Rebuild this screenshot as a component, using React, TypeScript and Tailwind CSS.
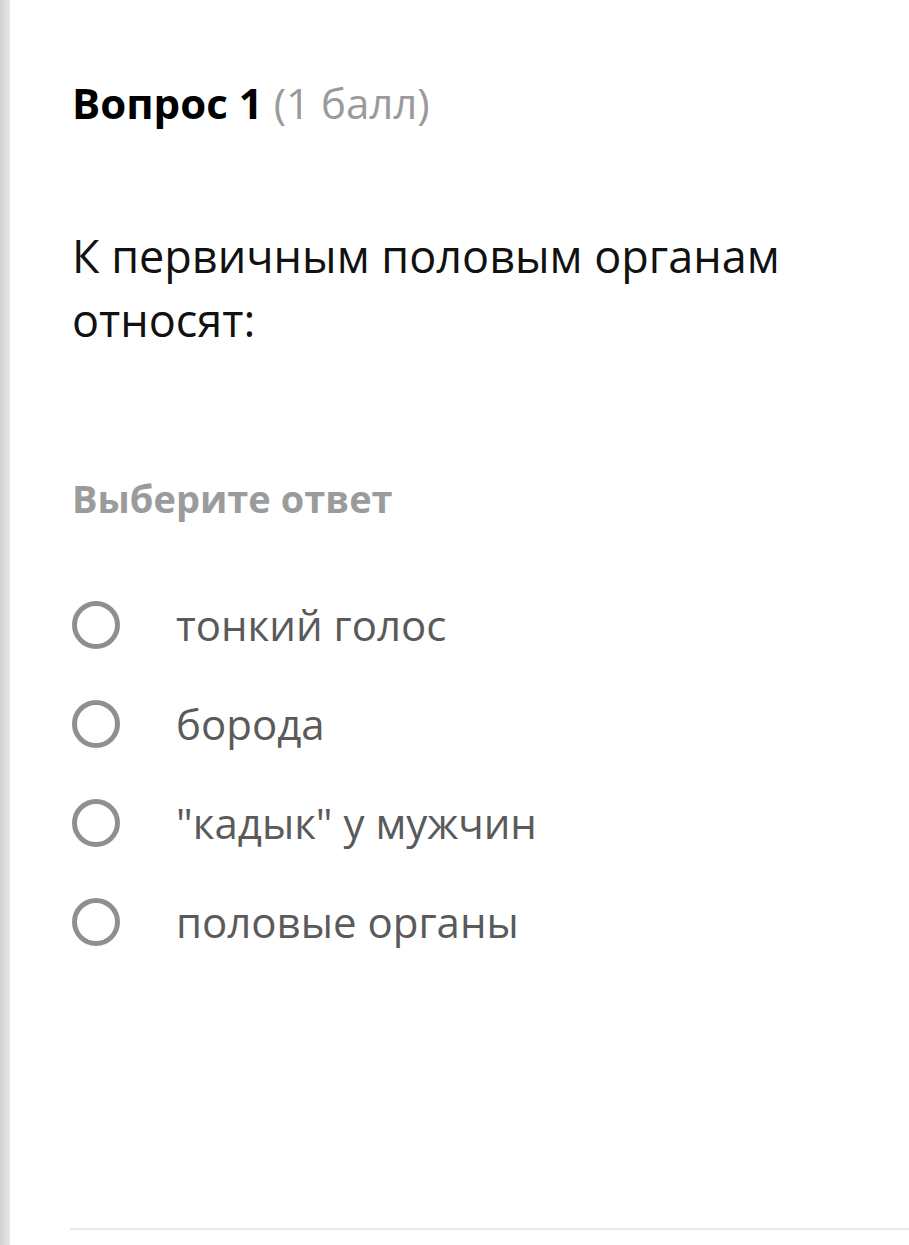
export default function App() {
  const options = ['тонкий голос', 'борода', '"кадык" у мужчин', 'половые органы']

  return (
    <div className="flex h-[1245px] w-full bg-white overflow-hidden" style={{ fontFamily: '"Open Sans", sans-serif' }}>
      {/* left edge shadow */}
      <div className="w-[10px] shrink-0 bg-gradient-to-r from-[#cfcfcf] to-[#e9e9e9]" />

      <div className="flex flex-1 flex-col">
        <div className="flex flex-1 flex-col pl-[62px] pt-[77px]">
          <h2 className="text-[42px] leading-[52px] text-black">
            <span className="font-bold">Вопрос 1</span>{' '}
            <span className="text-[#9a9a9a]">(1 балл)</span>
          </h2>

          <p className="mt-[95px] pr-[80px] text-[45px] leading-[64px] text-[#111]">
            К первичным половым органам относят:
          </p>

          <div className="mt-[121px] text-[38px] font-bold leading-[50px] text-[#9b9b9b]">
            Выберите ответ
          </div>

          <ul className="mt-[74px] flex flex-col gap-[43px]">
            {options.map((o) => (
              <li key={o} className="flex h-[56px] items-center">
                <span className="h-[48px] w-[48px] shrink-0 rounded-full border-[5px] border-[#8f8f8f]" />
                <span className="ml-[56px] text-[42px] leading-[56px] text-[#5a5a5a]">{o}</span>
              </li>
            ))}
          </ul>
        </div>

        {/* bottom divider */}
        <div className="mb-[15px] ml-[60px] h-[2px] bg-[#e8e8e8]" />
      </div>
    </div>
  )
}
